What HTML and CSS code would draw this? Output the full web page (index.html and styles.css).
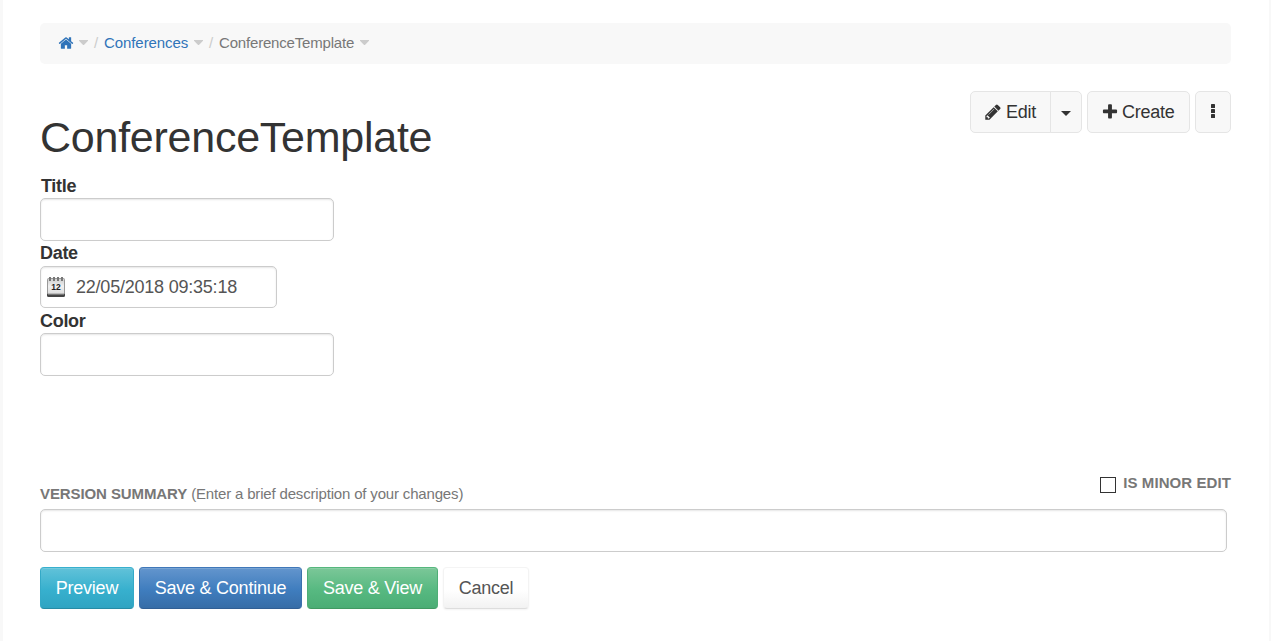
FILE: index.html
```html
<!DOCTYPE html>
<html lang="en">
<head>
<meta charset="utf-8">
<title>ConferenceTemplate</title>
<link rel="stylesheet" href="styles.css">
</head>
<body>
<div class="page">
  <nav class="breadcrumb">
    <svg class="home" viewBox="0 0 1792 1792"><path d="M1472 992v480q0 26-19 45t-45 19h-384v-384h-256v384h-384q-26 0-45-19t-19-45v-480q0-1 .5-3t.5-3l575-474 575 474q1 2 1 6zm223-69l-62 74q-8 9-21 11h-3q-13 0-21-7l-692-577-692 577q-12 8-24 7-13-2-21-11l-62-74q-8-10-7-23.500t11-21.500l719-599q32-26 76-26t76 26l244 204v-195q0-14 9-23t23-9h192q14 0 23 9t9 23v408l219 182q10 8 11 21.500t-7 23.500z"/></svg>
    <i class="caret caret-home"></i><span class="slash">/</span>
    <a class="crumb crumb-link">Conferences</a><i class="caret"></i><span class="slash">/</span>
    <span class="crumb crumb-current">ConferenceTemplate</span><i class="caret"></i>
  </nav>
  <header class="heading">
    <h1>ConferenceTemplate</h1>
    <div class="toolbar">
      <div class="group">
        <button class="tool edit"><svg class="icon" viewBox="0 0 1792 1792"><path d="M491 1536l91-91-235-235-91 91v107h128v128h107zm523-928q0-22-22-22-10 0-17 7l-542 542q-7 7-7 17 0 22 22 22 10 0 17-7l542-542q7-7 7-17zm-54-192l416 416-832 832h-416v-416zm683 96q0 53-37 90l-166 166-416-416 166-165q36-38 90-38 53 0 91 38l235 234q37 39 37 91z"/></svg><span>Edit</span></button>
        <button class="tool drop" aria-label="More edit actions"><i class="caret caret-dark"></i></button>
      </div>
      <button class="tool create"><svg class="icon" viewBox="0 0 1792 1792"><path d="M1600 736v192q0 40-28 68t-68 28h-416v416q0 40-28 68t-68 28h-192q-40 0-68-28t-28-68v-416h-416q-40 0-68-28t-28-68v-192q0-40 28-68t68-28h416v-416q0-40 28-68t68-28h192q40 0 68 28t28 68v416h416q40 0 68 28t28 68z"/></svg><span>Create</span></button>
      <button class="tool more" aria-label="More actions"><svg class="dots" viewBox="0 0 4 14"><rect width="4" height="4" rx=".6"/><rect y="5" width="4" height="4" rx=".6"/><rect y="10" width="4" height="4" rx=".6"/></svg></button>
    </div>
  </header>
  <form>
    <label class="label label-low label-title">Title</label>
    <div class="field"></div>
    <label class="label">Date</label>
    <div class="field date">
      <svg class="calendar" viewBox="0 0 20 22">
        <defs><linearGradient id="paper" x2="0" y2="1"><stop offset="0" stop-color="#ccc"/><stop offset=".5" stop-color="#f0f0f0"/><stop offset="1" stop-color="#ddd"/></linearGradient></defs>
        <rect x="1" y="4" width="18" height="17" rx="1.500" fill="#444"/>
        <rect x="1.500" y="2.500" width="17" height="15.500" rx="1" fill="url(#paper)" stroke="#999"/>
        <path d="M2 18.500h16" stroke="#777"/>
        <g fill="#777"><rect x="3" y="1" width="2" height="4"/><rect x="7" y="1" width="2" height="4"/><rect x="11" y="1" width="2" height="4"/><rect x="15" y="1" width="2" height="4"/></g>
        <text x="5.200" y="13.500">12</text>
      </svg>
      <span>22/05/2018 09:35:18</span>
    </div>
    <label class="label label-low">Color</label>
    <div class="field"></div>
    <div class="summary-head">
      <div class="summary-label"><b>VERSION SUMMARY</b> <span class="hint">(Enter a brief description of your changes)</span></div>
      <label class="minor"><i class="checkbox"></i><b>IS MINOR EDIT</b></label>
    </div>
    <div class="field summary"></div>
    <div class="actions">
      <button type="button" class="btn preview"><span>Preview</span></button>
      <button type="button" class="btn continue"><span>Save &amp; Continue</span></button>
      <button type="button" class="btn view"><span>Save &amp; View</span></button>
      <button type="button" class="btn cancel"><span>Cancel</span></button>
    </div>
  </form>
</div>
</body>
</html>
```
FILE: styles.css
```css
* { box-sizing: border-box; }
body { margin: 0; background: #f8f8f8; color: #333; font: 18px/25px "Liberation Sans", Arial, sans-serif; }
button { font: inherit; margin: 0; padding: 0; }
svg { display: block; flex: none; }
.page { height: 641px; overflow: hidden; margin: 0 2px 0 3px; padding: 23px 38px 0 37px; background: #fff; }
.breadcrumb { display: flex; align-items: center; height: 41px; padding: 0 18px 2px; background: #f8f8f8; border-radius: 5px; font-size: 15px; }
.home { width: 16px; height: 16px; fill: #3074b9; }
.caret { flex: none; width: 9px; height: 5px; background: #ccc; clip-path: polygon(0 0, 100% 0, 100% 15%, 55% 100%, 45% 100%, 0 15%); margin: 0 0 0 6px; }
.caret-home { margin-left: 5px; }
.slash { width: 16px; padding-left: 6px; color: #ccc; }
.crumb { white-space: nowrap; }
.crumb-link { width: 84px; color: #3074b9; letter-spacing: -.08px; }
.crumb-current { width: 135px; color: #777; letter-spacing: -.18px; }
.heading { display: flex; justify-content: space-between; height: 109px; padding-top: 27px; }
h1 { margin: 22px 0 0; font-size: 43px; line-height: 48px; font-weight: 400; letter-spacing: -.25px; }
.toolbar { display: flex; gap: 5px; }
.group { display: flex; }
.tool { display: flex; align-items: center; height: 42px; color: #333; background: #f8f8f8; border: 1px solid #e5e5e5; border-radius: 5px; letter-spacing: -.25px; }
.icon { width: 18px; height: 18px; fill: #333; }
.edit { width: 81px; padding-left: 13px; gap: 4px; border-radius: 5px 0 0 5px; }
.drop { width: 32px; margin-left: -1px; justify-content: center; border-radius: 0 5px 5px 0; }
.caret-dark { width: 10px; height: 5px; background: #333; clip-path: polygon(0 0, 100% 0, 50% 100%); margin: 3px 0 0; }
.create { width: 103px; padding-left: 13px; gap: 3px; }
.more { width: 36px; padding-bottom: 2px; justify-content: center; }
.dots { width: 4px; height: 14px; fill: #333; }
.label { display: block; height: 25px; font-weight: 700; letter-spacing: -.3px; }
.label-low { padding-top: 1px; }
.label-title { padding-left: 1px; }
.field { width: 294px; height: 43px; background: #fff; border: 1px solid #ccc; border-radius: 5px; box-shadow: inset 0 1px 2px rgba(0,0,0,.1); }
.date { display: flex; align-items: center; width: 237px; height: 42px; padding-left: 5px; color: #555; letter-spacing: -.22px; }
.date span { margin-left: 10px; }
.calendar { width: 20px; height: 22px; }
.calendar text { font: 700 8.500px "Liberation Sans", Arial, sans-serif; letter-spacing: 0; fill: #222; }
.summary-head { display: flex; justify-content: space-between; height: 133px; padding-top: 94px; color: #777; font-size: 15px; }
.summary-label { padding-top: 11px; white-space: nowrap; letter-spacing: -.1px; }
.hint { letter-spacing: -.17px; }
.minor { display: flex; white-space: nowrap; letter-spacing: .08px; }
.checkbox { width: 16px; height: 16px; margin: 7px 7px 0 0; background: #fff; border: 1px solid #333; }
.summary { width: 1187px; }
.actions { display: flex; gap: 5px; margin-top: 15px; }
.btn { height: 42px; color: #fff; border: 1px solid; border-radius: 4px; box-shadow: inset 0 1px 0 rgba(255,255,255,.15); white-space: nowrap; letter-spacing: -.25px; }
.preview { width: 94px; background: linear-gradient(#61c2d9, #37b0ce 55%, #30a4c2); border-color: #37b0ce #34a9c7 #278ba5; }
.continue { width: 163px; background: linear-gradient(#6395cd, #3f7dbe 55%, #376da7); border-color: #4078b9 #3b71ad #315f94; }
.view { width: 131px; background: linear-gradient(#7bc798, #57b981 55%, #4bad75); border-color: #55b77d #4fae76 #419962; }
.cancel { width: 86px; color: #555; background: linear-gradient(#fff 55%, #f2f2f2); border-color: #f4f4f4 #f3f3f3 #ddd; box-shadow: 0 1px 2px rgba(0,0,0,.05); }
```
